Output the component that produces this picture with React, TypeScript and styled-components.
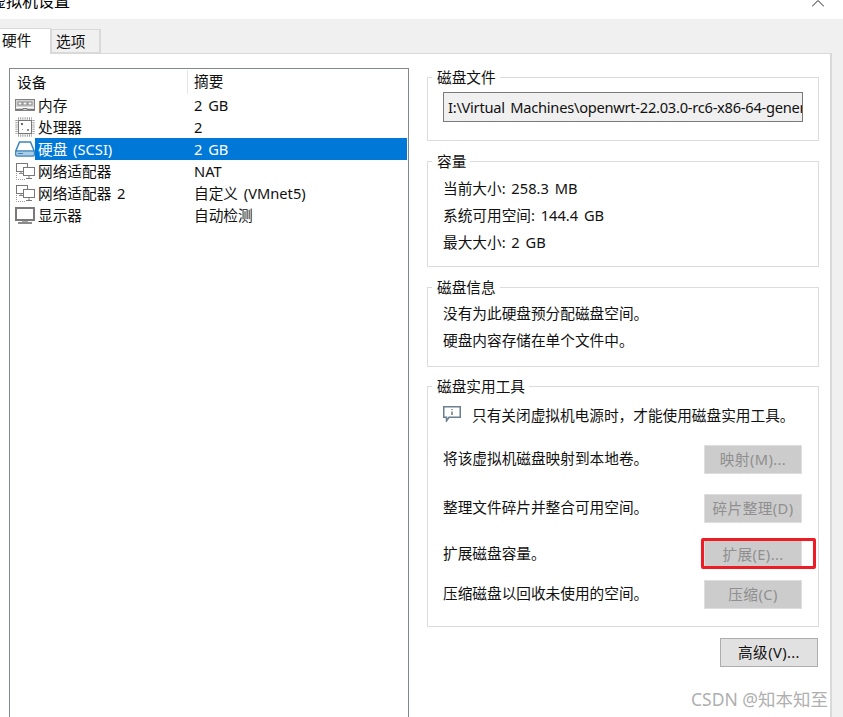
import styled, { createGlobalStyle } from "styled-components";
import type { ReactNode } from "react";

const GlobalStyle = createGlobalStyle`
  html, body {
    margin: 0;
    padding: 0;
    height: 100%;
    overflow: hidden;
    background: #f0f0f0;
  }
  body {
    font-family: "Noto Sans", "Noto Sans CJK SC", sans-serif;
    font-size: 14.67px;
    word-spacing: 2px;
    color: #111;
  }
`;

const MemoryIcon = () => (
  <svg width="20" height="13" viewBox="0 0 20 13" fill="none">
    <rect x="0.5" y="0.5" width="19" height="11" fill="#d4d4d4" stroke="#808080" />
    <rect x="3" y="3" width="4" height="3" fill="#f4f4f4" stroke="#777" strokeWidth="0.8" />
    <rect x="8" y="3" width="4" height="3" fill="#f4f4f4" stroke="#777" strokeWidth="0.8" />
    <rect x="13" y="3" width="4" height="3" fill="#f4f4f4" stroke="#777" strokeWidth="0.8" />
    <path d="M1 8.5h18" stroke="#fff" />
    <path d="M1 10.5h7v-1h4v1h7" stroke="#777" />
  </svg>
);

const CpuIcon = () => (
  <svg width="20" height="20" viewBox="0 0 20 20" fill="none">
    <rect x="3.5" y="3.5" width="13" height="13" fill="#fff" stroke="#777" />
    <path d="M3 1.5h14M3 18.5h14M1.5 3v14M18.5 3v14" stroke="#999" strokeWidth="2.4" strokeDasharray="1 1.2" />
    <rect x="6" y="6" width="2" height="2" fill="#666" />
    <rect x="12" y="12" width="2" height="2" fill="#888" />
    <rect x="7" y="12" width="1" height="1" fill="#aaa" />
  </svg>
);

const DiskIcon = () => (
  <svg width="20" height="16" viewBox="0 0 20 16" fill="none">
    <path
      d="M4.5 1h11l3.7 9v4a1 1 0 0 1-1 1H1.8a1 1 0 0 1-1-1v-4z"
      fill="#fff"
      stroke="#3d85b8"
      strokeWidth="1.5"
    />
    <path d="M1 10h18" stroke="#3d85b8" strokeWidth="1.5" />
    <rect x="2" y="11" width="16" height="3" fill="#a9cde6" />
    <path d="M3 12.5h5" stroke="#3d85b8" />
  </svg>
);

const NetworkIcon = () => (
  <svg width="20" height="17" viewBox="0 0 20 17" fill="none">
    <rect x="1.5" y="0.5" width="11" height="8" fill="#fff" stroke="#777" />
    <path d="M6 9v1.5M4 10.5h4" stroke="#888" />
    <rect x="8.5" y="4.5" width="11" height="8" fill="#fff" stroke="#777" />
    <path d="M14 13v2M11 15.5h6" stroke="#777" />
    <path d="M1.5 10v6.5h9" stroke="#999" strokeDasharray="1 1" />
  </svg>
);

const DisplayIcon = () => (
  <svg width="20" height="17" viewBox="0 0 20 17" fill="none">
    <rect x="1" y="1" width="18" height="12" fill="#fff" stroke="#7a7a7a" strokeWidth="2" />
    <rect x="7" y="14" width="6" height="1" fill="#aaa" />
    <rect x="3" y="15" width="14" height="2" fill="#8a8a8a" />
  </svg>
);

const InfoIcon = () => (
  <svg width="18" height="16" viewBox="0 0 18 16" fill="none">
    <path d="M.75.75h16.5v10.5H6L3.5 15v-3.75H.75z" fill="#fff" stroke="#6b7f8e" strokeWidth="1.5" />
    <path d="M9 3v1M9 5.5V9" stroke="#333" />
  </svg>
);

const devices: { icon: ReactNode; name: string; summary: string; selected?: boolean }[] = [
  { icon: <MemoryIcon />, name: "内存", summary: "2 GB" },
  { icon: <CpuIcon />, name: "处理器", summary: "2" },
  { icon: <DiskIcon />, name: "硬盘 (SCSI)", summary: "2 GB", selected: true },
  { icon: <NetworkIcon />, name: "网络适配器", summary: "NAT" },
  { icon: <NetworkIcon />, name: "网络适配器 2", summary: "自定义 (VMnet5)" },
  { icon: <DisplayIcon />, name: "显示器", summary: "自动检测" },
];

const Window = styled.div`
  width: 843px;
  height: 717px;
  display: flex;
  flex-direction: column;
  overflow: hidden;
`;

const TitleBar = styled.div`
  height: 19px;
  flex: none;
  background: #fff;
  display: flex;
  justify-content: space-between;
  overflow: hidden;
`;

const Title = styled.span`
  font-size: 16px;
  line-height: 16px;
  margin: -7px 0 0 -10px;
  color: #000;
`;

const CloseMark = styled.svg`
  margin-right: 19px;
`;

const TabStrip = styled.div`
  height: 34px;
  flex: none;
  display: flex;
  align-items: flex-end;
`;

const Tab = styled.div<{ $active?: boolean }>`
  box-sizing: border-box;
  height: ${(p) => (p.$active ? "26px" : "24px")};
  width: ${(p) => (p.$active ? "51px" : "50px")};
  margin-bottom: ${(p) => (p.$active ? "-1px" : "0")};
  position: relative;
  padding-left: ${(p) => (p.$active ? "2px" : "4px")};
  background: ${(p) => (p.$active ? "#fff" : "#f0f0f0")};
  border: 1px solid #d9d9d9;
  border-left: ${(p) => (p.$active ? "none" : "1px solid #d9d9d9")};
  border-bottom: ${(p) => (p.$active ? "none" : "1px solid #d9d9d9")};
  border-right: ${(p) => (p.$active ? "1px solid #d9d9d9" : "2px solid #d9d9d9")};
  line-height: 22px;
`;

const Panel = styled.div`
  flex: 1;
  width: 832px;
  box-sizing: border-box;
  background: #fff;
  border-top: 1px solid #d9d9d9;
  border-right: 2px solid #d9d9d9;
  padding: 14px 0 0 9px;
  display: flex;
  gap: 18px;
  min-height: 0;
`;

const DeviceList = styled.div`
  width: 400px;
  flex: none;
  box-sizing: border-box;
  height: 660px;
  border: 1px solid #828790;
`;

const HeaderRow = styled.div`
  display: grid;
  grid-template-columns: 178px 1fr;
  height: 25px;
  line-height: 24px;
`;

const HeaderCell = styled.div<{ $divider?: boolean }>`
  padding-left: ${(p) => (p.$divider ? "7px" : "6px")};
  border-right: ${(p) => (p.$divider ? "1px solid #e5e5e5" : "none")};
  margin-top: ${(p) => (p.$divider ? "1px" : "0")};
`;

const DeviceRow = styled.div`
  display: grid;
  grid-template-columns: 5px 20px 152px 1fr;
  height: 22px;
  line-height: 22px;
  align-items: center;
`;

const IconSlot = styled.div`
  grid-column: 2;
  height: 22px;
  display: flex;
  align-items: center;
  justify-content: center;
`;

const RowName = styled.div<{ $selected?: boolean }>`
  background: ${(p) => (p.$selected ? "#0078d7" : "transparent")};
  color: ${(p) => (p.$selected ? "#fff" : "#111")};
  padding-left: 3px;
  height: 22px;
`;

const RowSummary = styled.div<{ $selected?: boolean }>`
  background: ${(p) => (p.$selected ? "#0078d7" : "transparent")};
  color: ${(p) => (p.$selected ? "#fff" : "#111")};
  padding-left: 7px;
  margin-right: 1px;
  height: 22px;
`;

const Details = styled.div`
  width: 392px;
  flex: none;
  display: flex;
  flex-direction: column;
  gap: 10px;
  margin-top: -1px;
`;

const Group = styled.fieldset<{ $height: number }>`
  box-sizing: border-box;
  margin: 0;
  min-width: 0;
  height: ${(p) => p.$height}px;
  padding: 0 15px;
  border: 1px solid #dcdcdc;
  display: flex;
  flex-direction: column;
`;

const ToolsGroup = styled(Group)`
  margin-top: -1px;
`;

const Legend = styled.legend`
  margin-left: -11px;
  padding: 0 4px 0 5px;
  height: 20px;
  line-height: 20px;
`;

const PathBox = styled.div`
  box-sizing: border-box;
  width: 360px;
  height: 30px;
  margin-top: 5px;
  padding-left: 4px;
  border: 1px solid #7a7a7a;
  background: #f0f0f0;
  line-height: 28px;
  letter-spacing: -0.26px;
  white-space: nowrap;
  overflow: hidden;
`;

const Lines = styled.div<{ $top: number }>`
  display: flex;
  flex-direction: column;
  gap: 5px;
  margin-top: ${(p) => p.$top}px;
  line-height: 22px;
`;

const Notice = styled.div`
  display: flex;
  align-items: center;
  gap: 11px;
  height: 22px;
  margin-top: 7px;
`;

const ToolRow = styled.div<{ $top: number }>`
  display: flex;
  align-items: center;
  justify-content: space-between;
  margin-top: ${(p) => p.$top}px;
  height: 29px;
`;

const ToolLabel = styled.span`
  padding-bottom: 4px;
`;

const Button = styled.div<{ $disabled?: boolean }>`
  box-sizing: border-box;
  width: 98px;
  height: 29px;
  margin-right: 1px;
  background: ${(p) => (p.$disabled ? "#cccccc" : "#e1e1e1")};
  border: 1px solid ${(p) => (p.$disabled ? "#dedede" : "#adadad")};
  color: ${(p) => (p.$disabled ? "#8f8f8f" : "#111")};
  text-align: center;
  line-height: 27px;
  letter-spacing: 0.4px;
  position: relative;
`;

const RedHighlight = styled.div`
  position: absolute;
  left: -4px;
  top: -3px;
  width: 115px;
  height: 31px;
  box-sizing: border-box;
  border: 3px solid #ee1c25;
  border-radius: 2px;
`;

const Footer = styled.div`
  display: flex;
  justify-content: flex-end;
  margin-top: 1px;
`;

const Watermark = styled.div`
  position: absolute;
  right: 15px;
  bottom: 8px;
  font-size: 17.5px;
  line-height: 20px;
  word-spacing: 0;
  color: #b0b0b0;
`;

const App = () => (
  <Window>
    <GlobalStyle />
    <TitleBar>
      <Title>虚拟机设置</Title>
      <CloseMark width="12" height="7" viewBox="0 0 12 7" fill="none">
        <path d="M0 6.5L6 .5l6 6" stroke="#222" />
      </CloseMark>
    </TitleBar>
    <TabStrip>
      <Tab $active>硬件</Tab>
      <Tab>选项</Tab>
    </TabStrip>
    <Panel>
      <DeviceList>
        <HeaderRow>
          <HeaderCell $divider>设备</HeaderCell>
          <HeaderCell>摘要</HeaderCell>
        </HeaderRow>
        {devices.map((d) => (
          <DeviceRow key={d.name}>
            <IconSlot>{d.icon}</IconSlot>
            <RowName $selected={d.selected}>{d.name}</RowName>
            <RowSummary $selected={d.selected}>{d.summary}</RowSummary>
          </DeviceRow>
        ))}
      </DeviceList>
      <Details>
        <Group $height={74}>
          <Legend>磁盘文件</Legend>
          <PathBox>I:\Virtual Machines\openwrt-22.03.0-rc6-x86-64-generic</PathBox>
        </Group>
        <Group $height={116}>
          <Legend>容量</Legend>
          <Lines $top={6}>
            <span>当前大小: 258.3 MB</span>
            <span>系统可用空间: 144.4 GB</span>
            <span>最大大小: 2 GB</span>
          </Lines>
        </Group>
        <Group $height={90}>
          <Legend>磁盘信息</Legend>
          <Lines $top={5}>
            <span>没有为此硬盘预分配磁盘空间。</span>
            <span>硬盘内容存储在单个文件中。</span>
          </Lines>
        </Group>
        <ToolsGroup $height={251}>
          <Legend>磁盘实用工具</Legend>
          <Notice>
            <InfoIcon />
            <span>只有关闭虚拟机电源时，才能使用磁盘实用工具。</span>
          </Notice>
          <ToolRow $top={20}>
            <ToolLabel>将该虚拟机磁盘映射到本地卷。</ToolLabel>
            <Button $disabled>映射(M)...</Button>
          </ToolRow>
          <ToolRow $top={20}>
            <ToolLabel>整理文件碎片并整合可用空间。</ToolLabel>
            <Button $disabled>碎片整理(D)</Button>
          </ToolRow>
          <ToolRow $top={17}>
            <ToolLabel>扩展磁盘容量。</ToolLabel>
            <Button $disabled>
              扩展(E)...
              <RedHighlight />
            </Button>
          </ToolRow>
          <ToolRow $top={11}>
            <ToolLabel>压缩磁盘以回收未使用的空间。</ToolLabel>
            <Button $disabled>压缩(C)</Button>
          </ToolRow>
        </ToolsGroup>
        <Footer>
          <Button>高级(V)...</Button>
        </Footer>
      </Details>
    </Panel>
    <Watermark>CSDN @知本知至</Watermark>
  </Window>
);

export default App;
